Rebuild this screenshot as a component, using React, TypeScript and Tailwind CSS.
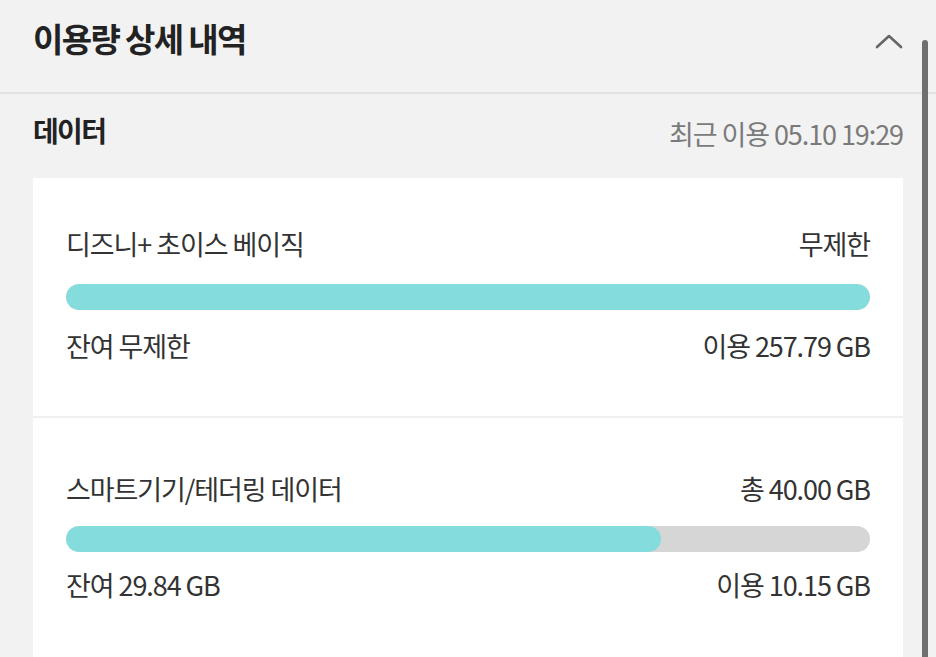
import React from "react"

const font = { fontFamily: '"Noto Sans CJK KR", "Noto Sans", sans-serif' }

interface UsageRowProps {
  name: string
  total: string
  remain: string
  used: string
  percent: number
  pad: string
  barGap: string
  textGap: string
}

function UsageRow({ name, total, remain, used, percent, pad, barGap, textGap }: UsageRowProps) {
  return (
    <div className={`px-[33px] ${pad} text-[#333] text-[27px] tracking-[-0.04em]`}>
      <div className="flex justify-between items-center h-[36px]">
        <span>{name}</span>
        <span>{total}</span>
      </div>
      <div className={`${barGap} h-[26px] rounded-full bg-[#d6d6d6] overflow-hidden`}>
        <div className="h-full rounded-full bg-[#84dcdc]" style={{ width: `${percent}%` }} />
      </div>
      <div className={`${textGap} flex justify-between items-center h-[36px]`}>
        <span>{remain}</span>
        <span>{used}</span>
      </div>
    </div>
  )
}

export default function App() {
  return (
    <div className="relative w-[936px] h-[657px] overflow-hidden bg-[#f2f2f2]" style={font}>
      <div className="h-[94px] flex items-center justify-between px-[33px] border-b-2 border-[#e3e3e3]">
        <h1 className="text-[33px] font-bold text-[#222] tracking-[-0.05em] -mt-[14px]">이용량 상세 내역</h1>
        <svg width="28" height="16" viewBox="0 0 28 16" className="-mt-[10px]">
          <polyline points="2,14 14,3 26,14" fill="none" stroke="#666" strokeWidth="2.6" strokeLinecap="round" strokeLinejoin="round" />
        </svg>
      </div>

      <div className="px-[33px]">
        <div className="flex justify-between items-center h-[84px]">
          <span className="text-[28px] font-bold text-[#222] tracking-[-0.06em] -mt-[12px]">데이터</span>
          <span className="text-[27px] text-[#7a7a7a] tracking-[-0.04em] -mt-[4px]">최근 이용 05.10 19:29</span>
        </div>

        <div className="bg-white">
          <UsageRow
            name="디즈니+ 초이스 베이직"
            total="무제한"
            remain="잔여 무제한"
            used="이용 257.79 GB"
            percent={100}
            pad="pt-[48px] pb-[52px]"
            barGap="mt-[22px]"
            textGap="mt-[18px]"
          />
          <div className="h-[2px] bg-[#f0f0f0]" />
          <UsageRow
            name="스마트기기/테더링 데이터"
            total="총 40.00 GB"
            remain="잔여 29.84 GB"
            used="이용 10.15 GB"
            percent={74}
            pad="pt-[53px] pb-[80px]"
            barGap="mt-[19px]"
            textGap="mt-[15px]"
          />
        </div>
      </div>

      <div className="absolute left-[922px] top-[40px] w-[6px] h-[640px] rounded-full bg-[#6f6f6f]" />
    </div>
  )
}
